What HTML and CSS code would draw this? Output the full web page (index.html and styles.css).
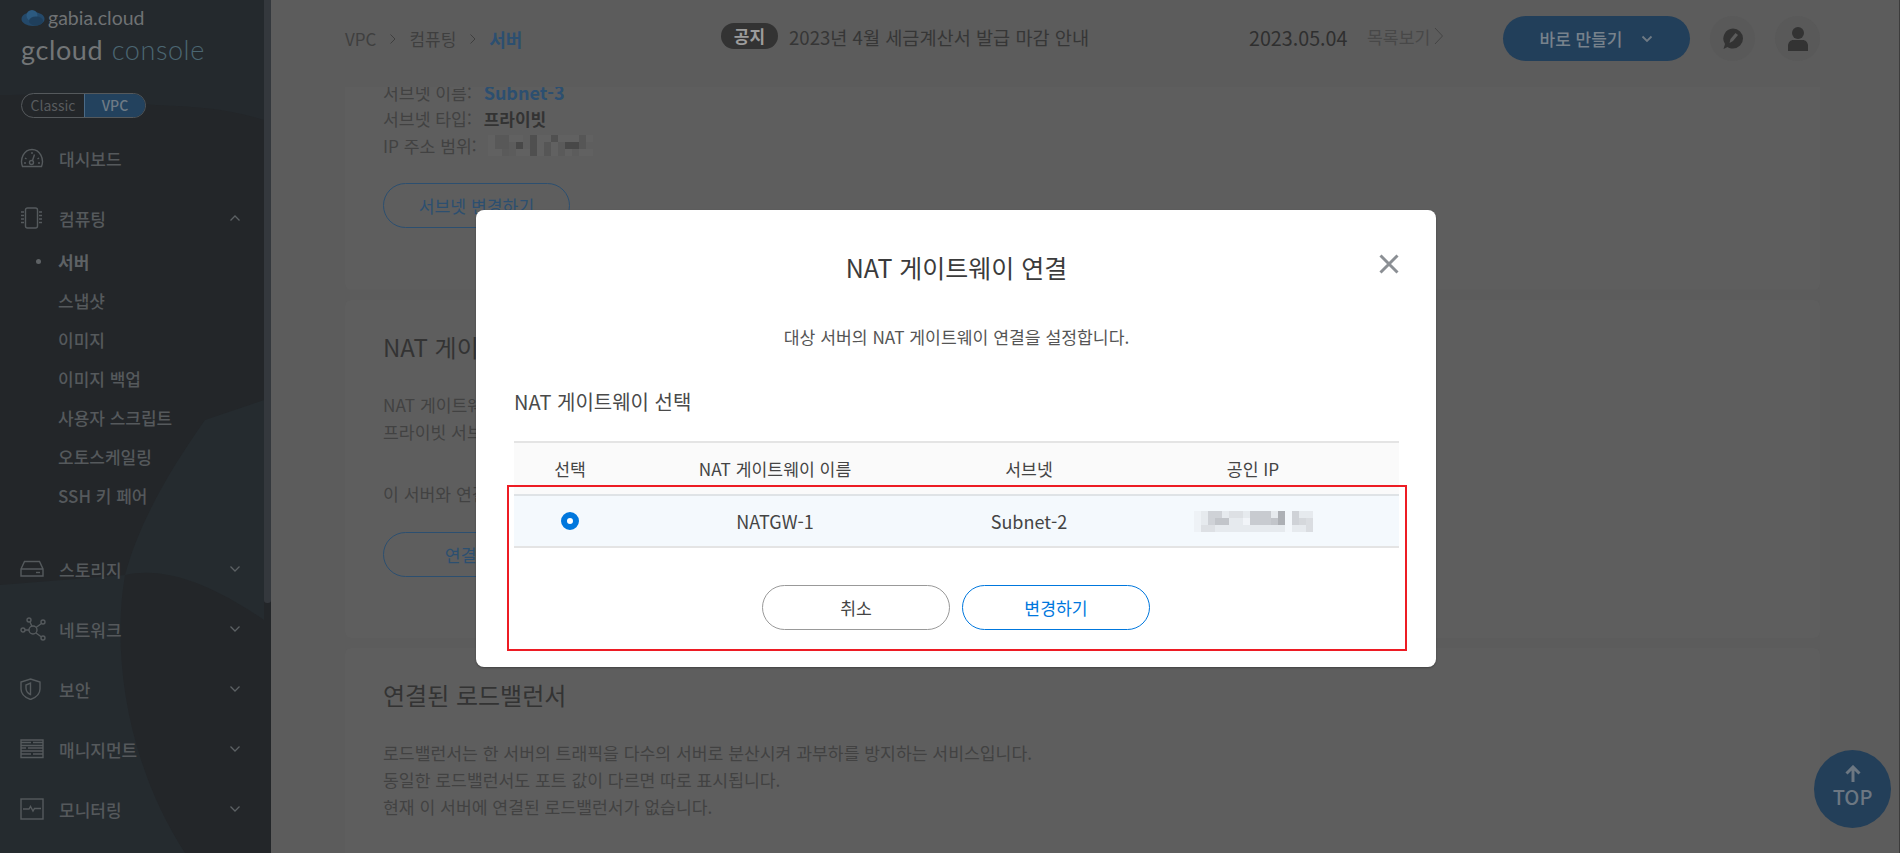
FILE: index.html
```html
<!DOCTYPE html>
<html lang="ko">
<head>
<meta charset="utf-8">
<title>gcloud console</title>
<link rel="stylesheet" href="styles.css">
</head>
<body>
<div class="app">
  <aside class="sidebar">
    <svg class="side-bg" width="264" height="853" viewBox="0 0 264 853">
      <path d="M0 0H264V120C200 100 150 110 130 100C100 90 60 95 0 95Z" fill="#24292d"/>
      <path d="M264 400L205 420C170 470 140 520 125 575L0 585V853H185C125 760 112 650 125 575C170 565 220 590 264 620Z" fill="#252b2f"/>
    </svg>
    <div class="scroll-thumb"></div>
    <div class="brand">
      <div class="brand-top">
        <svg width="24" height="18" viewBox="0 0 24 18"><ellipse cx="12" cy="10" rx="11.5" ry="7" fill="#24496a"/><circle cx="11" cy="6.5" r="5.5" fill="#2c5a80"/><ellipse cx="15" cy="12" rx="7" ry="4.5" fill="#1f3f5c"/></svg>
        <span>gabia.cloud</span>
      </div>
      <div class="brand-main">gcloud <em>console</em></div>
    </div>
    <div class="toggle"><span class="toggle-off">Classic</span><span class="toggle-on">VPC</span></div>
    <nav class="menu">
      <div class="menu-item">
        <svg class="mi" width="24" height="20" viewBox="0 0 24 20"><path d="M2.5 18.5C-.5 11 4 1.5 12 1.5S24.500 11 21.500 18.500Z" fill="none" stroke="#555a5d"/><path d="M12 4v2M5 10l1.500 1M19 10l-1.500 1M4 15h2M18 15h2" stroke="#555a5d"/><circle cx="11.500" cy="14.500" r="2" fill="none" stroke="#555a5d"/><path d="M12.500 12.500l2-6" stroke="#555a5d"/></svg>
        <span>대시보드</span>
      </div>
      <div class="menu-item menu-open">
        <svg class="mi" width="24" height="22" viewBox="0 0 24 22"><rect x="5.500" y="1" width="12" height="20" rx="2" fill="none" stroke="#555a5d"/><path d="M1 5h3M1 8.500h3M1 12h3M1 15.500h3M19 5h3M19 8.500h3M19 12h3M19 15.500h3" stroke="#555a5d"/></svg>
        <span>컴퓨팅</span>
        <svg class="chev" width="12" height="8" viewBox="0 0 12 8"><path d="M1.500 6.500L6 2l4.500 4.500" fill="none" stroke="#5c6164" stroke-width="1.300"/></svg>
      </div>
      <ul class="sub">
        <li class="sub-active">서버</li>
        <li>스냅샷</li>
        <li>이미지</li>
        <li>이미지 백업</li>
        <li>사용자 스크립트</li>
        <li>오토스케일링</li>
        <li>SSH 키 페어</li>
      </ul>
      <div class="menu-item">
        <svg class="mi" width="24" height="18" viewBox="0 0 24 18"><path d="M1 9L4.500 1.500h15L23 9v7H1ZM1 9h22" fill="none" stroke="#555a5d"/><path d="M16 12.500h4" stroke="#555a5d"/></svg>
        <span>스토리지</span>
        <svg class="chev" width="12" height="8" viewBox="0 0 12 8"><path d="M1.500 1.500L6 6l4.500-4.500" fill="none" stroke="#5c6164" stroke-width="1.300"/></svg>
      </div>
      <div class="menu-item">
        <svg class="mi" width="26" height="24" viewBox="0 0 26 24"><circle cx="13" cy="13" r="4" fill="none" stroke="#555a5d"/><circle cx="9" cy="3" r="2" fill="none" stroke="#555a5d"/><circle cx="23" cy="5" r="2" fill="none" stroke="#555a5d"/><circle cx="3" cy="13" r="2" fill="none" stroke="#555a5d"/><circle cx="23" cy="21" r="2" fill="none" stroke="#555a5d"/><path d="M10 5l2 4.500M21.500 6.500L16 10.500M5 13h4M16 16l5.500 4" stroke="#555a5d"/></svg>
        <span>네트워크</span>
        <svg class="chev" width="12" height="8" viewBox="0 0 12 8"><path d="M1.500 1.500L6 6l4.500-4.500" fill="none" stroke="#5c6164" stroke-width="1.300"/></svg>
      </div>
      <div class="menu-item">
        <svg class="mi" width="24" height="22" viewBox="0 0 24 22"><path d="M10.500 1L20 4v7c0 5-4 8.500-9.500 10.500C5 19.500 1 16 1 11V4Z" fill="none" stroke="#555a5d"/><path d="M10.500 5v11.500C7 15 6 12.500 6 10V7Z" fill="none" stroke="#555a5d"/></svg>
        <span>보안</span>
        <svg class="chev" width="12" height="8" viewBox="0 0 12 8"><path d="M1.500 1.500L6 6l4.500-4.500" fill="none" stroke="#5c6164" stroke-width="1.300"/></svg>
      </div>
      <div class="menu-item">
        <svg class="mi" width="24" height="20" viewBox="0 0 24 20"><path d="M1 1h22v5.500H1ZM1 6.500h22V12H1ZM1 12h22v6.500H1ZM1 3.500h10M13 3.500h10M1 9h5M8 9h15M1 15h10M13 15h10" fill="none" stroke="#555a5d"/></svg>
        <span>매니지먼트</span>
        <svg class="chev" width="12" height="8" viewBox="0 0 12 8"><path d="M1.500 1.500L6 6l4.500-4.500" fill="none" stroke="#5c6164" stroke-width="1.300"/></svg>
      </div>
      <div class="menu-item">
        <svg class="mi" width="24" height="22" viewBox="0 0 24 22"><rect x="1" y="1" width="22" height="20" fill="none" stroke="#555a5d"/><path d="M3 11h6l1.500-2.500L13 13l1.500-2.500H21" fill="none" stroke="#555a5d"/></svg>
        <span>모니터링</span>
        <svg class="chev" width="12" height="8" viewBox="0 0 12 8"><path d="M1.500 1.500L6 6l4.500-4.500" fill="none" stroke="#5c6164" stroke-width="1.300"/></svg>
      </div>
    </nav>
  </aside>

  <main class="main">
    <header class="topbar">
      <div class="crumbs">
        <span>VPC</span>
        <svg width="8" height="12" viewBox="0 0 8 12"><path d="M1.500 1.500L6 6l-4.500 4.500" fill="none" stroke="#3f3f3f" stroke-width="1"/></svg>
        <span>컴퓨팅</span>
        <svg width="8" height="12" viewBox="0 0 8 12"><path d="M1.500 1.500L6 6l-4.500 4.500" fill="none" stroke="#3f3f3f" stroke-width="1"/></svg>
        <strong>서버</strong>
      </div>
      <div class="notice">
        <span class="badge">공지</span>
        <span class="notice-text">2023년 4월 세금계산서 발급 마감 안내</span>
      </div>
      <div class="date">2023.05.04</div>
      <div class="list-link">목록보기
        <svg width="10" height="20" viewBox="0 0 10 20"><path d="M1 2l7.500 8L1 18" fill="none" stroke="#444" stroke-width="1"/></svg>
      </div>
      <div class="make-btn"><span>바로 만들기</span>
        <svg width="12" height="8" viewBox="0 0 12 8"><path d="M1.500 1.500L6 6l4.500-4.500" fill="none" stroke="#6f7a84" stroke-width="1.800"/></svg>
      </div>
      <div class="circle">
        <svg width="22" height="24" viewBox="0 0 22 24"><path d="M11 1.500a10 10 0 0 1 0 20c-2 0-4-.5-5.500-1.500L1.500 22 3 17A10 10 0 0 1 11 1.500Z" fill="#333"/><path d="M7.500 16l1-4 5-6 2.500 2-5 6Z" fill="#5c5c5c"/></svg>
      </div>
      <div class="circle">
        <svg width="22" height="26" viewBox="0 0 22 26"><circle cx="11" cy="7" r="6" fill="#333"/><path d="M1 25v-5c0-4 3-6 5-6h10c2 0 5 2 5 6v5Z" fill="#333"/></svg>
      </div>
    </header>

    <div class="content">
      <section class="panel panel-first">
        <div class="line">서브넷 이름:<b class="val-blue">Subnet-3</b></div>
        <div class="line">서브넷 타입:<b class="val-dark">프라이빗</b></div>
        <div class="line">IP 주소 범위:
          <svg class="pix" width="105" height="21" viewBox="0 0 15 3" shape-rendering="crispEdges">
            <rect width="15" height="3" fill="#616161"/>
            <rect x="1" width="2" height="2" fill="#585858"/><rect x="3" y="1" width="1" height="2" fill="#5c5c5c"/><rect x="4" y="1" width="1" height="1" fill="#484848"/><rect x="5" width="1" height="2" fill="#5e5e5e"/><rect x="6" width="1" height="3" fill="#4f4f4f"/><rect x="8" y="1" width="1" height="2" fill="#565656"/><rect x="9" width="1" height="1" fill="#505050"/><rect x="10" y="1" width="1" height="2" fill="#5a5a5a"/><rect x="11" y="1" width="2" height="1" fill="#484848"/><rect x="13" width="1" height="2" fill="#565656"/><rect x="2" y="2" width="1" height="1" fill="#5a5a5a"/><rect x="12" y="2" width="1" height="1" fill="#5c5c5c"/><rect x="14" y="1" width="1" height="1" fill="#5e5e5e"/>
          </svg>
        </div>
        <div class="outline-btn btn-gap-a">서브넷 변경하기</div>
      </section>

      <section class="panel">
        <h2>NAT 게이트웨이</h2>
        <p class="para">NAT 게이트웨이는 프라이빗 서브넷의 서버가 인터넷에 연결할 수 있도록 합니다.<br>프라이빗 서브넷에 있는 서버에 연결할 수 있습니다.</p>
        <p class="para para-gap">이 서버와 연결된 NAT 게이트웨이가 없습니다.</p>
        <div class="outline-btn btn-gap-b">연결하기</div>
      </section>

      <section class="panel panel-last">
        <h2>연결된 로드밸런서</h2>
        <p class="para">로드밸런서는 한 서버의 트래픽을 다수의 서버로 분산시켜 과부하를 방지하는 서비스입니다.<br>동일한 로드밸런서도 포트 값이 다르면 따로 표시됩니다.<br>현재 이 서버에 연결된 로드밸런서가 없습니다.</p>
      </section>
    </div>

    <div class="top-btn">
      <svg width="18" height="18" viewBox="0 0 18 18"><path d="M9 17V2M2.500 8.500L9 2l6.500 6.500" fill="none" stroke="#6c7782" stroke-width="3"/></svg>
      <span>TOP</span>
    </div>
  </main>

  <div class="modal">
    <div class="modal-head">
      <h1>NAT 게이트웨이 연결</h1>
      <svg class="close" width="20" height="20" viewBox="0 0 20 20"><path d="M1.500 1.500l17 17M18.500 1.500l-17 17" stroke="#8b8f94" stroke-width="3"/></svg>
    </div>
    <p class="modal-sub">대상 서버의 NAT 게이트웨이 연결을 설정합니다.</p>
    <h3 class="modal-label">NAT 게이트웨이 선택</h3>
    <div class="tbl">
      <div class="tr thead"><div>선택</div><div>NAT 게이트웨이 이름</div><div>서브넷</div><div>공인 IP</div></div>
      <div class="tr tbody">
        <div><span class="radio"></span></div>
        <div>NATGW-1</div>
        <div>Subnet-2</div>
        <div class="ip-cell">
          <svg width="119" height="21" viewBox="0 0 17 3" shape-rendering="crispEdges">
            <rect width="17" height="3" fill="#e6eaee"/>
            <rect x="0" width="1" height="3" fill="#eef2f6"/><rect x="2" y="0" width="2" height="2" fill="#cfd2d7"/><rect x="3" y="1" width="2" height="1" fill="#c2c5ca"/><rect x="5" y="0" width="2" height="1" fill="#dde0e4"/><rect x="7" y="1" width="1" height="1" fill="#f1f4f8"/><rect x="8" y="0" width="3" height="2" fill="#c8cbd0"/><rect x="11" y="1" width="1" height="1" fill="#c2c5ca"/><rect x="12" y="0" width="1" height="2" fill="#adb0b5"/><rect x="13" y="0" width="1" height="3" fill="#f3f7fb"/><rect x="14" y="0" width="1" height="2" fill="#cfd2d7"/><rect x="15" y="1" width="1" height="1" fill="#d5d8dc"/><rect x="16" y="1" width="1" height="2" fill="#dadde1"/><rect x="1" y="2" width="2" height="1" fill="#dde0e4"/>
          </svg>
        </div>
      </div>
    </div>
    <div class="modal-actions">
      <div class="pill pill-gray">취소</div>
      <div class="pill pill-blue">변경하기</div>
    </div>
    <div class="highlight"></div>
  </div>
</div>
</body>
</html>
```

FILE: styles.css
```css
* { box-sizing: border-box; }
html, body { margin: 0; padding: 0; }
body {
  width: 1900px;
  height: 853px;
  overflow: hidden;
  background: #5c5c5c;
  font-family: "Noto Sans CJK KR", "Noto Sans", sans-serif;
  font-size: 17.200px;
  color: #3e3e3e;
}
.app { position: relative; display: flex; width: 1900px; height: 853px; overflow: hidden; }

/* sidebar */
.sidebar {
  position: relative;
  flex: 0 0 271px;
  height: 853px;
  background: #232629;
  color: #55595c;
  overflow: hidden;
}
.side-bg { position: absolute; left: 0; top: 0; }
.scroll-thumb {
  position: absolute; right: 0; top: 0;
  width: 7px; height: 603px;
  background: #34383d;
  border-radius: 0 0 3px 3px;
}
.brand { position: relative; padding: 9px 0 0 21px; height: 93px; }
.brand-top { display: flex; align-items: center; gap: 3px; height: 18px; font-family: "Lato", sans-serif; font-size: 19.500px; line-height: 18px; color: #6f7274; }
.brand-main { margin-top: 6px; font-family: "Lato", sans-serif; font-weight: 400; font-size: 27px; line-height: 34px; letter-spacing: .6px; color: #727577; }
.brand-main em { font-style: normal; font-weight: 300; color: #4b6672; margin-left: 1px; }
.toggle {
  position: relative;
  display: flex;
  width: 125px; height: 25px;
  margin-left: 21px;
  border: 1px solid #55595c;
  border-radius: 13px;
  overflow: hidden;
  font-size: 14px; line-height: 23px; text-align: center;
}
.toggle-off { width: 62px; color: #585b5e; }
.toggle-on { flex: 1; background: #23425e; color: #6e7a85; font-weight: 500; border-left: 1px solid #4b6a86; }
.menu { position: relative; padding-top: 10px; }
.menu-item {
  position: relative;
  display: flex; align-items: center;
  height: 60px;
  padding-left: 59px;
  font-weight: 500;
  font-size: 17px;
}
.mi { position: absolute; left: 20px; top: 50%; transform: translateY(-50%); }
.mi path, .mi rect, .mi circle { stroke-width: 1.400px; }
.chev { position: absolute; left: 229px; top: 26px; }
.sub { list-style: none; margin: -6px 0 0; padding: 0 0 0 58px; height: 297px; font-size: 17px; font-weight: 500; }
.sub li { height: 39px; line-height: 39px; }
.sub-active { position: relative; font-weight: 700; color: #5e6265; }
.sub-active::before { content: ""; position: absolute; left: -22px; top: 17px; width: 5px; height: 5px; border-radius: 50%; background: #5e6265; }

/* main */
.main { position: relative; flex: 1; min-width: 0; display: flex; flex-direction: column; border-right: 1px solid #3c3c3c; }
.topbar { flex: 0 0 87px; display: flex; align-items: center; padding: 0 79px 10px 74px; position: relative; z-index: 1; background: #5c5c5c; }
.crumbs { display: flex; align-items: center; gap: 12.500px; width: 376px; font-size: 17px; color: #3f3f3f; }
.crumbs strong { font-size: 18px; font-weight: 700; color: #2c4f70; }
.notice { display: flex; align-items: center; gap: 11px; width: 528px; margin-top: -5px; }
.badge { width: 57px; height: 26px; border-radius: 13px; background: #333; color: #9c9c9c; font-size: 17px; font-weight: 700; line-height: 26px; text-align: center; }
.notice-text { font-size: 18.600px; color: #363636; white-space: nowrap; }
.date { width: 118px; font-size: 19.700px; color: #2f2f2f; margin-top: -2px; }
.list-link { display: flex; align-items: center; gap: 4px; width: 136px; color: #484848; margin-top: -5px; }
.make-btn { display: flex; align-items: center; justify-content: center; gap: 19px; width: 187px; height: 45px; border-radius: 23px; background: #223f5a; color: #77828c; font-size: 17px; font-weight: 500; }
.circle { display: flex; align-items: center; justify-content: center; width: 45px; height: 45px; border-radius: 50%; background: #595959; margin-left: 20px; }

.content { flex: 1; min-height: 0; overflow: hidden; padding: 0 79px 0 74px; display: flex; flex-direction: column; gap: 10px; }
.panel { flex: none; padding: 29px 38px 61px; background: #5e5e5e; border-radius: 6px; }
.panel-first { padding-top: 0; padding-bottom: 62px; margin-top: -8px; clip-path: inset(8px 0 0 0); }
.panel-last { padding-bottom: 40px; }
.line { display: flex; align-items: center; height: 26.600px; color: #424242; }
.line b { margin-left: 12px; font-weight: 700; }
.val-blue { color: #2c4f70; font-size: 18px; }
.val-dark { color: #333; font-size: 17px; }
.pix { margin-left: 11px; }
.outline-btn { width: 187px; height: 45px; border: 1px solid #2c4f70; border-radius: 23px; color: #2c4f70; text-align: center; line-height: 43px; }
.btn-gap-a { margin-top: 24px; }
.btn-gap-b { margin-top: 25px; }
h2 { margin: 0; font-size: 24px; font-weight: 400; line-height: 36px; color: #333; }
.para { margin: 26px 0 0; line-height: 27px; color: #424242; white-space: nowrap; }
.para-gap { margin-top: 35px; }
.top-btn {
  position: absolute; left: 1543px; top: 750px;
  width: 77px; height: 78px;
  border-radius: 50%;
  background: #233f59;
  color: #6c7782;
  display: flex; flex-direction: column; align-items: center;
  padding-top: 15px;
  gap: 2px;
  font-size: 20px; font-weight: 500; line-height: 24px;
}

/* modal */
.modal {
  position: absolute; left: 476px; top: 210px;
  width: 960px; height: 457px;
  background: #fff;
  border-radius: 8px;
  box-shadow: 0 1px 2px rgba(0,0,0,.3);
  padding: 0 37px 0 38px;
  color: #444;
}
.modal-head { height: 116px; padding-top: 35px; text-align: center; }
.modal-head h1 { margin: 0; font-size: 25px; font-weight: 400; line-height: 44px; color: #3b3b3b; }
.close { position: absolute; left: 903px; top: 44px; }
.modal-sub { margin: 0; height: 22px; text-align: center; line-height: 22px; color: #555; }
.modal-label { margin: 39px 0 0; font-size: 20px; font-weight: 400; line-height: 30px; color: #4a4a4a; }
.tbl { margin-top: 24px; border-top: 2px solid #e4e4e4; }
.tr { display: grid; grid-template-columns: 112px 298px 210px 238px 27px; align-items: center; text-align: center; }
.thead { height: 51px; background: #fafafa; }
.tbody { height: 54px; background: #f4f9fd; border-top: 2px solid #dfe3e6; border-bottom: 2px solid #e4e4e4; font-size: 18px; }
.radio { display: block; width: 18px; height: 18px; margin: 0 auto; border-radius: 50%; border: 6.500px solid #0077dd; background: #fff; }
.ip-cell svg { display: block; margin: 0 auto; }
.modal-actions { display: flex; justify-content: center; gap: 12px; margin-top: 37px; padding-right: 1px; }
.pill { width: 188px; height: 45px; border-radius: 23px; text-align: center; line-height: 43px; }
.pill-gray { border: 1px solid #999; color: #444; }
.pill-blue { border: 1px solid #0077dd; color: #0077dd; }
.highlight { position: absolute; left: 31px; top: 275px; width: 900px; height: 166px; border: 2px solid #ed1c24; pointer-events: none; }
```
